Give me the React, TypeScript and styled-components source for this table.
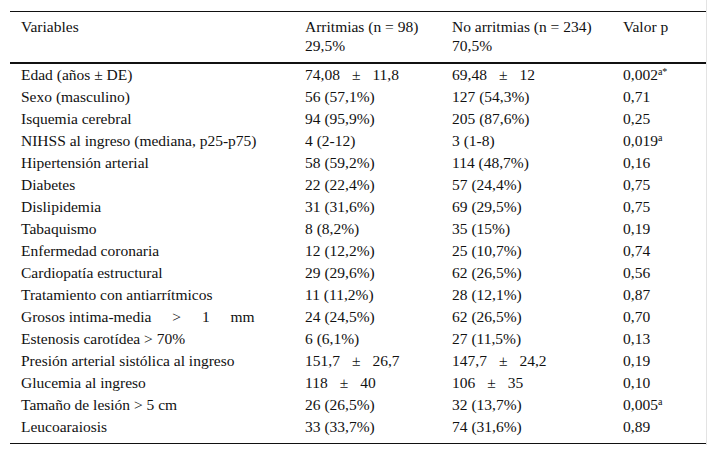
import { FunctionComponent, ReactNode } from 'react';
import styled, { createGlobalStyle } from 'styled-components';

const GlobalStyle = createGlobalStyle`
  html, body {
    margin: 0;
    padding: 0;
    background: #ffffff;
    font-family: 'Liberation Serif', 'DejaVu Serif', serif;
  }
`;

const StyledFrame = styled.div`
  width: 696px;
  height: 434px;
  padding: 11px 0 0 10px;
  border-right: 1px solid #e3e3e3;
  background-color: #ffffff;
`;

const StyledTable = styled.table`
  width: 696px;
  border-collapse: collapse;
  table-layout: fixed;

  font-family: 'Liberation Serif', 'DejaVu Serif', serif;
  font-size: 15.5px;
  color: #111111;

  border-top: 1px solid #111111;
  border-bottom: 1px solid #111111;
`;

const StyledHead = styled.thead`
  border-bottom: 2px solid #111111;
`;

const StyledHeadCell = styled.th`
  padding: 5px 11px 7px;
  line-height: 19px;
  font-family: inherit;
  font-weight: normal;
  text-align: left;
  vertical-align: top;
`;

const StyledRow = styled.tr`
  &:last-child td {
    padding-bottom: 5px;
  }
`;

const StyledCell = styled.td`
  padding: 0 11px;
  height: 22px;
  line-height: 22px;
  font-family: inherit;
  white-space: nowrap;
  vertical-align: top;
`;

const StyledPm = styled.span`
  display: inline-block;
  margin: 0 12px;
`;

const StyledSup = styled.sup`
  font-size: 10px;
  line-height: 0;
  vertical-align: 5px;
`;

const StyledWide = styled.span`
  word-spacing: 17px;
`;

const Mean: FunctionComponent<{ value: string; sd: string }> = ({ value, sd }) => (
  <>
    {value}
    <StyledPm>±</StyledPm>
    {sd}
  </>
);

type Row = {
  label: ReactNode;
  arr: ReactNode;
  noArr: ReactNode;
  p: ReactNode;
};

const rows: Row[] = [
  {
    label: 'Edad (años ± DE)',
    arr: <Mean value='74,08' sd='11,8' />,
    noArr: <Mean value='69,48' sd='12' />,
    p: (
      <>
        0,002<StyledSup>a</StyledSup>
        <StyledSup>*</StyledSup>
      </>
    ),
  },
  { label: 'Sexo (masculino)', arr: '56 (57,1%)', noArr: '127 (54,3%)', p: '0,71' },
  { label: 'Isquemia cerebral', arr: '94 (95,9%)', noArr: '205 (87,6%)', p: '0,25' },
  {
    label: 'NIHSS al ingreso (mediana, p25-p75)',
    arr: '4 (2-12)',
    noArr: '3 (1-8)',
    p: (
      <>
        0,019<StyledSup>a</StyledSup>
      </>
    ),
  },
  { label: 'Hipertensión arterial', arr: '58 (59,2%)', noArr: '114 (48,7%)', p: '0,16' },
  { label: 'Diabetes', arr: '22 (22,4%)', noArr: '57 (24,4%)', p: '0,75' },
  { label: 'Dislipidemia', arr: '31 (31,6%)', noArr: '69 (29,5%)', p: '0,75' },
  { label: 'Tabaquismo', arr: '8 (8,2%)', noArr: '35 (15%)', p: '0,19' },
  { label: 'Enfermedad coronaria', arr: '12 (12,2%)', noArr: '25 (10,7%)', p: '0,74' },
  { label: 'Cardiopatía estructural', arr: '29 (29,6%)', noArr: '62 (26,5%)', p: '0,56' },
  { label: 'Tratamiento con antiarrítmicos', arr: '11 (11,2%)', noArr: '28 (12,1%)', p: '0,87' },
  {
    label: (
      <>
        Grosos intima-media<StyledWide> &gt; 1 mm</StyledWide>
      </>
    ),
    arr: '24 (24,5%)',
    noArr: '62 (26,5%)',
    p: '0,70',
  },
  { label: 'Estenosis carotídea > 70%', arr: '6 (6,1%)', noArr: '27 (11,5%)', p: '0,13' },
  {
    label: 'Presión arterial sistólica al ingreso',
    arr: <Mean value='151,7' sd='26,7' />,
    noArr: <Mean value='147,7' sd='24,2' />,
    p: '0,19',
  },
  {
    label: 'Glucemia al ingreso',
    arr: <Mean value='118' sd='40' />,
    noArr: <Mean value='106' sd='35' />,
    p: '0,10',
  },
  {
    label: 'Tamaño de lesión > 5 cm',
    arr: '26 (26,5%)',
    noArr: '32 (13,7%)',
    p: (
      <>
        0,005<StyledSup>a</StyledSup>
      </>
    ),
  },
  { label: 'Leucoaraiosis', arr: '33 (33,7%)', noArr: '74 (31,6%)', p: '0,89' },
];

export default function App() {
  return (
    <>
      <GlobalStyle />
      <StyledFrame>
        <StyledTable>
          <colgroup>
            <col style={{ width: 284 }} />
            <col style={{ width: 147 }} />
            <col style={{ width: 171 }} />
            <col style={{ width: 94 }} />
          </colgroup>
          <StyledHead>
            <tr>
              <StyledHeadCell>Variables</StyledHeadCell>
              <StyledHeadCell>
                Arritmias (n = 98)
                <br />
                29,5%
              </StyledHeadCell>
              <StyledHeadCell>
                No arritmias (n = 234)
                <br />
                70,5%
              </StyledHeadCell>
              <StyledHeadCell>Valor p</StyledHeadCell>
            </tr>
          </StyledHead>
          <tbody>
            {rows.map((row, i) => (
              <StyledRow key={i}>
                <StyledCell>{row.label}</StyledCell>
                <StyledCell>{row.arr}</StyledCell>
                <StyledCell>{row.noArr}</StyledCell>
                <StyledCell>{row.p}</StyledCell>
              </StyledRow>
            ))}
          </tbody>
        </StyledTable>
      </StyledFrame>
    </>
  );
}
